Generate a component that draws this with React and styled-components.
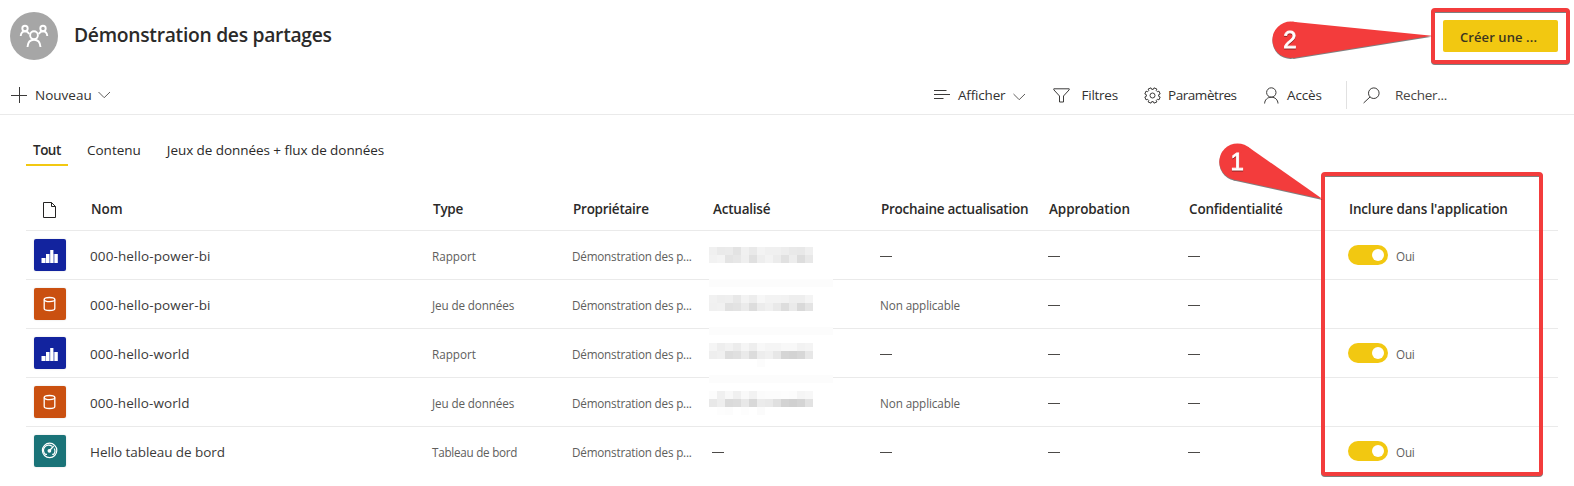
import React from "react";
import styled, { createGlobalStyle } from "styled-components";

const GlobalStyle = createGlobalStyle`
  * { box-sizing: border-box; }
  body {
    margin: 0;
    background: #fff;
    color: #2b2a29;
    font-family: "Open Sans", "Noto Sans", sans-serif;
    overflow: hidden;
  }
`;

const RED = "#f33c3c";

const Page = styled.div`
  position: relative;
  width: 1574px;
  height: 486px;
  overflow: hidden;
`;

const Label = styled.span`
  white-space: nowrap;
  letter-spacing: ${(p) => p.$ls || 0}px;
`;

/* ---------- header ---------- */

const Header = styled.header`
  display: flex;
  align-items: center;
  height: 76px;
  padding: 0 16px 4px 10px;
`;

const Avatar = styled.div`
  width: 48px;
  height: 48px;
  border-radius: 50%;
  background: #a6a6a6;
  svg { display: block; }
`;

const Title = styled.h1`
  flex: 1;
  margin: 0 0 2px 16px;
  font-size: 19.3px;
  line-height: 28px;
  font-weight: 550;
  letter-spacing: -0.29px;
`;

const PrimaryButton = styled.button`
  width: 115px;
  height: 32px;
  padding: 1px 4px 0 0;
  border: 0;
  border-radius: 2px;
  background: #f2c811;
  color: #3b3520;
  font: 550 13px "Open Sans", sans-serif;
`;

/* ---------- toolbar ---------- */

const Toolbar = styled.nav`
  display: flex;
  height: 39px;
  border-bottom: 1px solid #eaeaea;
  font-size: 13.5px;
`;

const ToolItem = styled.div`
  display: flex;
  align-items: center;
  width: ${(p) => p.$width}px;
  padding-left: ${(p) => p.$pad || 0}px;
  color: ${(p) => p.$color || "#323130"};
`;

const ToolIcon = styled.svg`
  flex: none;
  margin-right: ${(p) => p.$gap}px;
  fill: none;
  stroke: #3b3a39;
  stroke-width: 1;
`;

const Chevron = styled(ToolIcon)`
  margin: ${(p) => p.$top || 0}px 0 0 ${(p) => p.$left}px;
  stroke: #605e5c;
`;

const Spacer = styled.div`
  flex: 1;
`;

const Divider = styled.div`
  width: 1px;
  height: 28px;
  margin-top: 5px;
  background: #e1e1e1;
`;

/* ---------- tabs ---------- */

const Tabs = styled.div`
  display: flex;
  gap: 12px;
  padding: 21px 0 0 26px;
`;

const Tab = styled.div`
  height: 30px;
  padding: 0 7px;
  min-width: ${(p) => p.$width}px;
  border-bottom: 2px solid ${(p) => (p.$active ? "#f2c811" : "transparent")};
  font-size: 13.5px;
  line-height: 28px;
  font-weight: ${(p) => (p.$active ? 600 : 400)};
`;

/* ---------- table ---------- */

const Table = styled.section`
  margin: 22px 16px 0 26px;
`;

const Row = styled.div`
  display: grid;
  grid-template-columns: 64px 342px 140px 140px 168px 168px 140px 160px 1fr;
  align-items: center;
  height: ${(p) => (p.$head ? 43 : 49)}px;
  border-bottom: 1px solid ${(p) => (p.$last ? "transparent" : "#eaeaea")};
`;

const HeadCell = styled.div`
  padding-left: 1px;
  font-size: 13.5px;
  font-weight: 550;
  svg { display: block; margin: 3px 0 0 15px; }
`;

const NameCell = styled.div`
  padding-top: 2px;
  font-size: 13.5px;
  color: #3b3a39;
`;

const Cell = styled.div`
  padding-top: 1px;
  font-size: 11.7px;
  line-height: 16px;
  color: #605e5c;
`;

const Dash = styled.div`
  width: 12px;
  height: 1px;
  margin-top: 2px;
  background: #4c4a48;
`;

const Tile = styled.div`
  width: 32px;
  height: 32px;
  margin-left: 8px;
  border-radius: 2px;
  background: ${(p) => p.$bg};
  box-shadow: 0 0 2px rgba(0, 0, 0, 0.15);
  svg { display: block; }
`;

const ToggleCell = styled.div`
  display: flex;
  align-items: center;
  gap: 8px;
  font-size: 11.7px;
  line-height: 16px;
  color: #605e5c;
  span { padding-top: 1px; }
`;

const Toggle = styled.div`
  display: flex;
  justify-content: flex-end;
  align-items: center;
  width: 40px;
  height: 20px;
  padding: 0 4px;
  border-radius: 10px;
  background: #f2c811;
`;

const Knob = styled.div`
  width: 12px;
  height: 12px;
  border-radius: 50%;
  background: #fff;
`;

/* ---------- overlays ---------- */

const Frame = styled.div`
  position: absolute;
  left: ${(p) => p.$x}px;
  top: ${(p) => p.$y}px;
  width: ${(p) => p.$w}px;
  height: ${(p) => p.$h}px;
  border: 4px solid ${RED};
  border-radius: 4px;
  filter: drop-shadow(0 1px 0.4px rgba(0, 0, 0, 0.5));
`;

const Callouts = styled.svg`
  position: absolute;
  left: 1210px;
  top: 0;
  g { filter: drop-shadow(0 1px 0.4px rgba(0, 0, 0, 0.5)); }
  text {
    font: 24px "Liberation Sans", sans-serif;
    fill: #fff;
    stroke: #fff;
    stroke-width: 0.8;
    filter: drop-shadow(0 1px 0.5px rgba(0, 0, 0, 0.4));
  }
`;

const Mosaic = styled.div`
  position: absolute;
  left: 709px;
  top: 247px;
  width: 124px;
`;

const MosaicLine = styled.div`
  display: flex;
  height: 8px;
  background: ${(p) => (p.$band ? "#fcfcfc" : "transparent")};
`;

const Pixel = styled.i`
  width: 8px;
  height: 8px;
  background: ${(p) => (p.$v === "--" ? "transparent" : `#${p.$v}${p.$v}${p.$v}`)};
`;

const MOSAIC = [
  "f0 ea eb e3 f0 e9 f3 f0 f0 ed e9 e8 ef",
  "f2 f4 e4 e7 ef e0 ee f3 ec e1 ed dd e8",
  "", "", "band", "",
  "f1 ee ef e8 f3 ed f7 f3 f3 f2 ee ee f4",
  "f0 f1 e1 e3 eb dd ec f0 e9 dd ea d9 e4",
  "", "", "band", "",
  "f5 ee f2 ec f5 ee f8 f5 f5 f8 f8 f2 f4",
  "ee f0 dd e0 ea dc ed f0 e7 d5 d3 d7 e7",
  "-- -- -- -- -- -- fc",
  "", "band", "",
  "fc f0 f8 f0 f9 f2 fb fc fc fd fc f5 f7",
  "e8 ee da dc e8 d8 eb e9 e0 d3 d0 d4 e2",
  "-- fd fc -- fd -- fb",
];

const ReportIcon = () => (
  <Tile $bg="#12239e">
    <svg width="32" height="32" fill="#fff">
      <rect x="7.5" y="19" width="3.6" height="5" />
      <rect x="12" y="15" width="3.2" height="9" />
      <rect x="16.2" y="11" width="3.2" height="13" />
      <rect x="20.4" y="15" width="3.4" height="9" />
      <path d="M11.5 19v5M15.7 15v9M19.9 15v9" stroke="#fff" strokeOpacity=".55" />
    </svg>
  </Tile>
);

const DatasetIcon = () => (
  <Tile $bg="#ca5010">
    <svg width="32" height="32" fill="none" stroke="#fff" strokeWidth="1.3">
      <ellipse cx="15.5" cy="11.6" rx="5.3" ry="2.1" />
      <path d="M10.2 11.6v8.8c0 1.2 2.3 2.1 5.3 2.1s5.3-.9 5.3-2.1v-8.8" />
    </svg>
  </Tile>
);

const DashboardIcon = () => (
  <Tile $bg="#1a7378">
    <svg width="32" height="32" fill="none" stroke="#fff" strokeWidth="1.2">
      <circle cx="15.6" cy="15.4" r="7.2" />
      <path d="M11.4 19.4a5 5 0 0 1 6.6-8.1M20.2 13.5a5 5 0 0 1-.6 5.9M11.4 19.4h1.6M18.2 19.4h1.6" />
      <path d="M15.6 15.6l4-4.6" strokeWidth="1.4" />
      <circle cx="15.4" cy="15.8" r="1.3" fill="#fff" />
    </svg>
  </Tile>
);

const GearIcon = () => {
  const pts = [];
  const n = 8;
  for (let i = 0; i < n; i++) {
    const a = ((i + 0.5) / n) * Math.PI * 2;
    [[-0.26, 6.2], [-0.2, 7.8], [0.2, 7.8], [0.26, 6.2]].forEach(([d, r]) =>
      pts.push(`${(8.5 + r * Math.cos(a + d)).toFixed(2)},${(8.5 + r * Math.sin(a + d)).toFixed(2)}`)
    );
  }
  return (
    <ToolIcon $gap={7} width="17" height="17">
      <polygon points={pts.join(" ")} strokeLinejoin="round" />
      <circle cx="8.5" cy="8.5" r="2.5" />
    </ToolIcon>
  );
};

const HEADS = [
  ["Nom", 0], ["Type", -0.25], ["Propriétaire", -0.25], ["Actualisé", -0.22],
  ["Prochaine actualisation", -0.26], ["Approbation", -0.1],
  ["Confidentialité", -0.18], ["Inclure dans l'application", -0.18],
];

const KINDS = {
  report: { Icon: ReportIcon, label: "Rapport", ls: 0 },
  dataset: { Icon: DatasetIcon, label: "Jeu de données", ls: -0.12 },
  dashboard: { Icon: DashboardIcon, label: "Tableau de bord", ls: -0.26 },
};

const ITEMS = [
  { name: "000-hello-power-bi", ls: 0.11, kind: "report" },
  { name: "000-hello-power-bi", ls: 0.11, kind: "dataset" },
  { name: "000-hello-world", ls: 0.08, kind: "report" },
  { name: "000-hello-world", ls: 0.08, kind: "dataset" },
  { name: "Hello tableau de bord", ls: -0.07, kind: "dashboard" },
];

const ItemRow = ({ item, last }) => {
  const { Icon, label, ls } = KINDS[item.kind];
  const isDataset = item.kind === "dataset";
  return (
    <Row $last={last}>
      <Icon />
      <NameCell><Label $ls={item.ls}>{item.name}</Label></NameCell>
      <Cell><Label $ls={ls}>{label}</Label></Cell>
      <Cell><Label $ls={-0.2}>Démonstration des p...</Label></Cell>
      {last ? <Dash /> : <span />}
      {isDataset ? <Cell><Label $ls={-0.1}>Non applicable</Label></Cell> : <Dash />}
      <Dash />
      <Dash />
      {isDataset ? <span /> : (
        <ToggleCell>
          <Toggle><Knob /></Toggle>
          <Label $ls={-0.2}>Oui</Label>
        </ToggleCell>
      )}
    </Row>
  );
};

export default function App() {
  return (
    <Page>
      <GlobalStyle />
      <Header>
        <Avatar>
          <svg width="48" height="48" fill="none" stroke="#fff" strokeWidth="1.9">
            <circle cx="24" cy="23.2" r="3.9" />
            <path d="M17.5 35c.3-4.6 2.900-7.300 6.500-7.300s6.200 2.700 6.500 7.300" />
            <circle cx="15" cy="16.500" r="2.700" />
            <circle cx="33" cy="16.500" r="2.700" />
            <path d="M10.700 24c.3-2.800 1.900-4.600 4.300-4.600 2 0 3.400 1 4.200 2.600M37.300 24c-.3-2.800-1.900-4.600-4.300-4.600-2 0-3.400 1-4.200 2.600" />
          </svg>
        </Avatar>
        <Title>Démonstration des partages</Title>
        <PrimaryButton><Label $ls={0.1}>Créer une ...</Label></PrimaryButton>
      </Header>

      <Toolbar>
        <ToolItem $width={130} $pad={11}>
          <ToolIcon $gap={7} width="17" height="17"><path d="M0 8.500h16M8.500 0v16" /></ToolIcon>
          <Label>Nouveau</Label>
          <Chevron $left={6} width="13" height="8"><path d="M.5 1l5.700 5.700L12 1" /></Chevron>
        </ToolItem>
        <Spacer />
        <ToolItem $width={119}>
          <ToolIcon $gap={8} width="16" height="13">
            <path d="M0 1.500h12.500M0 5.500h16M0 9.500h9.500" />
          </ToolIcon>
          <Label $ls={-0.18}>Afficher</Label>
          <Chevron $left={8} $top={3} width="13" height="8"><path d="M.5 1l5.700 5.700L12 1" /></Chevron>
        </ToolItem>
        <ToolItem $width={91}>
          <ToolIcon $gap={11.500} width="17" height="15">
            <path d="M.8 .8h15.400v1L10.500 8v6H6.500V8L.8 1.800z" />
          </ToolIcon>
          <Label $ls={-0.25}>Filtres</Label>
        </ToolItem>
        <ToolItem $width={120}>
          <GearIcon />
          <Label $ls={-0.45}>Paramètres</Label>
        </ToolItem>
        <ToolItem $width={82}>
          <ToolIcon $gap={8} width="15" height="17">
            <circle cx="7.300" cy="5.500" r="4.700" />
            <path d="M.6 16.500c.2-3.700 2.800-6.300 6.700-6.300s6.500 2.600 6.700 6.300" />
          </ToolIcon>
          <Label $ls={-0.15}>Accès</Label>
        </ToolItem>
        <Divider />
        <ToolItem $width={227} $pad={16} $color="#484644">
          <ToolIcon $gap={15} width="17" height="17">
            <circle cx="10.800" cy="6.200" r="5.300" />
            <path d="M7 10L.6 16" />
          </ToolIcon>
          <Label $ls={-0.25}>Recher...</Label>
        </ToolItem>
      </Toolbar>

      <Tabs>
        <Tab $active $width={42}><Label $ls={-0.5}>Tout</Label></Tab>
        <Tab $width={66}><Label>Contenu</Label></Tab>
        <Tab $width={232}><Label $ls={-0.06}>Jeux de données + flux de données</Label></Tab>
      </Tabs>

      <Table>
        <Row $head>
          <HeadCell>
            <svg width="15" height="17" fill="none" stroke="#252423">
              <path d="M1.500 .5h8l4 4v11h-12zM9.500 .5v4h4" />
            </svg>
          </HeadCell>
          {HEADS.map(([text, ls]) => (
            <HeadCell key={text}><Label $ls={ls}>{text}</Label></HeadCell>
          ))}
        </Row>
        {ITEMS.map((item, i) => (
          <ItemRow key={i} item={item} last={i === ITEMS.length - 1} />
        ))}
      </Table>

      <Mosaic>
        {MOSAIC.map((line, i) => (
          <MosaicLine key={i} $band={line === "band"}>
            {line && line !== "band" && line.split(" ").map((v, j) => <Pixel key={j} $v={v} />)}
          </MosaicLine>
        ))}
      </Mosaic>

      <Frame $x={1431} $y={8} $w={139} $h={56} />
      <Frame $x={1321} $y={172} $w={222} $h={304} />
      <Callouts width="240" height="220">
        <g fill={RED}>
          <circle cx="80.600" cy="39.800" r="18.200" />
          <path d="M82.300 21.700L222 35.700L83.400 57.900L75 40z" />
          <circle cx="27.500" cy="161.600" r="18.200" />
          <path d="M37.900 146.700L112.500 199L23.600 179.400L22 160z" />
        </g>
        <text x="73.300" y="48.300">2</text>
        <text x="20.500" y="170.300">1</text>
      </Callouts>
    </Page>
  );
}
